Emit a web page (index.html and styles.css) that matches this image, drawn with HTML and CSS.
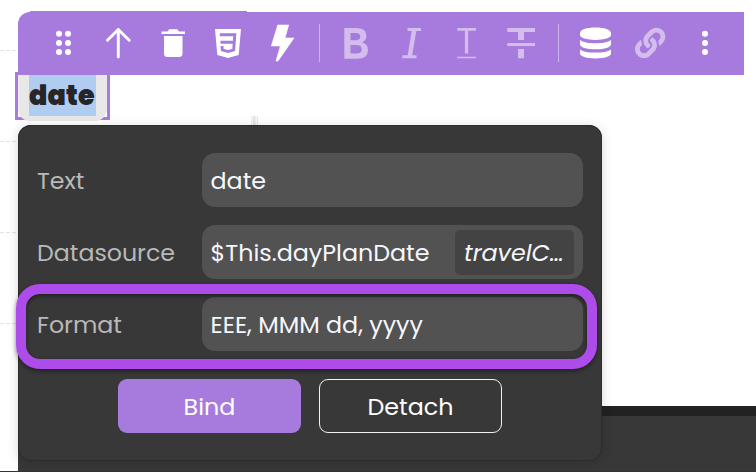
FILE: index.html
```html
<!DOCTYPE html>
<html lang="en">
<head>
<meta charset="utf-8">
<title>Data binding</title>
<link rel="stylesheet" href="styles.css">
</head>
<body>
<div class="editor">
  <div class="guide g1"></div><div class="guide g2"></div><div class="guide g3"></div><div class="guide g4"></div>
  <div class="guide-mark"></div>
  <div class="footer"></div>
  <div class="baseline"></div>
  <div class="toolbar">
    <div class="tool"><svg width="54" height="62" viewBox="36 12 54 62"><g fill="#fff"><circle cx="59" cy="33.8" r="3"/><circle cx="68" cy="33.8" r="3"/><circle cx="59" cy="43" r="3"/><circle cx="68" cy="43" r="3"/><circle cx="59" cy="52" r="3"/><circle cx="68" cy="52" r="3"/></g></svg></div>
    <div class="tool"><svg width="54" height="62" viewBox="91 12 54 62"><path d="M118.3 57V29.5M107.5 40.2L118.3 29.5L129.2 40.2" fill="none" stroke="#fff" stroke-width="2.9" stroke-linecap="round" stroke-linejoin="round"/></svg></div>
    <div class="tool"><svg width="54" height="62" viewBox="146 12 54 62"><path d="M161.5 31.4H167.5L169.2 29.3H177.3L179 31.4H185V34H161.5ZM164 36H182.5V53.5Q182.5 57 179 57H167.5Q164 57 164 53.5Z" fill="#fff"/></svg></div>
    <div class="tool"><svg width="54" height="62" viewBox="201 12 54 62"><path d="M215 29H241L238.7 55L228 58L217.3 55Z" fill="#fff"/><path d="M219.8 34.7H234.8L233.7 50L228 51.6L222.3 50L222 46M220.5 42.3H234" fill="none" stroke="#a77bde" stroke-width="2.9"/></svg></div>
    <div class="tool"><svg width="54" height="62" viewBox="256 12 54 62"><path d="M277.7 25H288.7L285 38H294L278 61H276L280.3 46H271.3Z" fill="#fff" stroke="#fff" stroke-linejoin="round" stroke-width=".6"/></svg></div>
    <div class="divider"></div>
    <div class="tool muted"><svg width="54" height="62" viewBox="329 12 54 62"><path fill-rule="evenodd" d="M344.3 28H356Q366.5 28 366.5 35.7Q366.5 40.5 362 42.2Q368 44 368 50Q368 58.7 357 58.7H344.3ZM350.5 33V40.2H355.5Q360.3 40.2 360.3 36.5Q360.3 33 355.5 33ZM350.5 45V53.6H356.5Q361.7 53.6 361.7 49.3Q361.7 45 356.5 45Z"/></svg></div>
    <div class="tool muted"><svg width="54" height="62" viewBox="384 12 54 62"><path d="M407.5 28H421V31H416.3L412.2 55.2H416.5V58.3H402.3V55.2H407.7L411.7 31H407.5Z"/></svg></div>
    <div class="tool muted"><svg width="54" height="62" viewBox="439 12 54 62"><path d="M457.3 28H476V30.7H468.2V53.5H464.9V30.7H457.3ZM457.3 56.7H476V58.3H457.3Z"/></svg></div>
    <div class="tool muted"><svg width="54" height="62" viewBox="494 12 54 62"><path d="M507.3 28H535V32.1H524V40H518V32.1H507.3ZM507.3 43H535V46H507.3ZM518 49H524V58.2H518Z"/></svg></div>
    <div class="divider wide"></div>
    <div class="tool"><svg width="54" height="62" viewBox="569 12 54 62"><path fill="#fff" d="M580 33.3C580 29.6 586.5 27.5 595.4 27.5S611 29.6 611 33.3V35.1C611 38 604.4 40 595.5 40S580 38 580 35.1ZM580 40C583 42.4 588.5 43.3 595.5 43.3S608 42.4 611 40V44.2C611 47.2 604.4 49.2 595.5 49.2S580 47.2 580 44.2ZM580 49.4C583 51.7 588.5 52.5 595.5 52.5S608 51.7 611 49.4V53.5C611 56.5 604.4 58.4 595.5 58.4S580 56.5 580 53.5Z"/></svg></div>
    <div class="tool muted"><svg width="54" height="62" viewBox="0 0 54 62"><g transform="translate(11 15.7) scale(.0592)"><path d="M326.612 185.391c59.747 59.809 58.927 155.698.36 214.59-.11.12-.24.25-.36.37l-67.2 67.2c-59.27 59.27-155.699 59.262-214.96 0-59.27-59.26-59.27-155.7 0-214.96l37.106-37.106c9.84-9.84 26.786-3.3 27.294 10.606.648 17.722 3.826 35.527 9.69 52.721 1.986 5.822.567 12.262-3.783 16.612l-13.087 13.087c-28.026 28.026-28.905 73.66-1.155 101.96 28.024 28.579 74.086 28.749 102.325.51l67.2-67.19c28.191-28.191 28.073-73.757 0-101.83-3.701-3.694-7.429-6.564-10.341-8.569a16.037 16.037 0 0 1-6.947-12.606c-.396-10.567 3.348-21.456 11.698-29.806l21.054-21.055c5.521-5.521 14.182-6.199 20.584-1.731a152.482 152.482 0 0 1 20.522 17.197zM467.547 44.449c-59.261-59.262-155.69-59.27-214.96 0l-67.2 67.2c-.12.12-.25.25-.36.37-58.566 58.892-59.387 154.781.36 214.59a152.454 152.454 0 0 0 20.521 17.196c6.402 4.468 15.064 3.789 20.584-1.731l21.054-21.055c8.35-8.35 12.094-19.239 11.698-29.806a16.037 16.037 0 0 0-6.947-12.606c-2.912-2.005-6.64-4.875-10.341-8.569-28.073-28.073-28.191-73.639 0-101.83l67.2-67.19c28.239-28.239 74.3-28.069 102.325.51 27.75 28.3 26.872 73.934-1.155 101.96l-13.087 13.087c-4.35 4.35-5.769 10.79-3.783 16.612 5.864 17.194 9.042 34.999 9.69 52.721.509 13.906 17.454 20.446 27.294 10.606l37.106-37.106c59.271-59.259 59.271-155.699.001-214.959z"/></g></svg></div>
    <div class="tool"><svg width="54" height="62" viewBox="679 12 54 62"><g fill="#fff"><circle cx="705" cy="33.8" r="3"/><circle cx="705" cy="43" r="3"/><circle cx="705" cy="52" r="3"/></g></svg></div>
  </div>
  <div class="selection"><div class="chip"><span class="selected">date</span></div></div>
  <div class="panel">
    <div class="row"><label class="label">Text</label><div class="field"><span>date</span></div></div>
    <div class="row"><label class="label">Datasource</label><div class="field"><span>$This.dayPlanDate</span><span class="badge">travelC…</span></div></div>
    <div class="row"><label class="label">Format</label><div class="field"><span>EEE, MMM dd, yyyy</span></div></div>
    <div class="actions"><button class="btn primary">Bind</button><button class="btn outline">Detach</button></div>
    <div class="highlight"></div>
  </div>
</div>
</body>
</html>
```
FILE: styles.css
```css
* { box-sizing: border-box; }
body { margin: 0; background: #fff; font-family: Poppins, Inter, sans-serif; font-feature-settings: "cv11"; }
.editor { position: relative; width: 756px; height: 472px; overflow: hidden; padding: 12px 12px 0 18px; }
.guide { position: absolute; left: 0; width: 18px; height: 1px; background: repeating-linear-gradient(90deg, #e4e4e4 0 4px, #fff 4px 6px); }
.g1 { top: 50px; }
.g2 { top: 141px; }
.g3 { top: 232px; }
.g4 { top: 323px; }
.guide-mark { position: absolute; left: 251px; top: 116px; width: 7px; height: 9px; background: repeating-linear-gradient(90deg, #eee 0 1px, #f8f8f8 1px 2px, #e4e4e4 2px 4px); }
.footer { position: absolute; left: 18px; right: 0; top: 406px; bottom: 0; background: #383838; border-top: 10px solid #222; }
.baseline { position: absolute; left: 0; right: 0; bottom: 0; height: 1px; background: #343033; }
.toolbar { position: relative; z-index: 2; height: 63px; padding-left: 18px; display: flex; align-items: stretch; background: #a77bde; border-radius: 12px 0 0 0; }
.toolbar::before { content: ""; position: absolute; left: 12px; top: -1px; width: 217px; height: 1px; background: #a77bde; }
.tool { flex: 0 0 55px; display: flex; }
.tool svg { display: block; overflow: visible; }
.muted { fill: #d4bced; }
.divider { flex: 0 0 17.5px; display: flex; justify-content: center; align-items: flex-start; padding-top: 12px; }
.divider::before { content: ""; width: 1px; height: 38px; background: #cdb3ed; }
.wide { flex-basis: 20px; }
.selection { position: relative; width: 95px; height: 48px; margin: -3px 0 0 -3px; border: 3px solid #a77bde; }
.chip { width: 89px; height: 46px; padding: 0 0 0 11px; background: #e8e8e8; border-radius: 0 0 12px 12px; }
.selected { display: block; width: 67px; height: 41px; line-height: 41px; background: #b0ccf1; color: #262626; font-size: 27px; font-weight: 900; letter-spacing: .2px; }
.panel { position: relative; width: 584px; height: 336px; margin-top: 5px; padding: 28px 19px 0; background: #383838; border-radius: 13px; box-shadow: 0 0 0 1px #2c2c2c inset, 0 2px 12px rgba(0,0,0,.16); color: #f5f7fc; font-size: 23.8px; font-weight: 400; display: flex; flex-direction: column; gap: 18px; }
.row { height: 54px; display: flex; align-items: center; }
.label { width: 164.5px; padding-top: 1px; color: #b8b8b8; font-size: 23.7px; white-space: nowrap; }
.field { flex: 1; height: 54px; padding: 1px 9px 0; border-radius: 13px; background: #525252; display: flex; align-items: center; justify-content: space-between; white-space: nowrap; }
.badge { width: 119px; height: 45px; line-height: 46px; padding-left: 9px; background: #434343; border-radius: 5px; font-style: italic; }
.actions { height: 54px; margin-top: 10px; display: flex; justify-content: center; gap: 18px; }
.btn { width: 183px; height: 54px; padding: 0; border: 0; border-radius: 9px; font: inherit; font-feature-settings: inherit; color: #fff; }
.primary { background: #a77bde; }
.outline { background: transparent; border: 1px solid #f2f2f2; }
.highlight { position: absolute; left: -2px; top: 158.5px; width: 581px; height: 85.5px; border: 10px solid #ae4ceb; border-radius: 24px; box-shadow: 0 2px 4px rgba(0,0,0,.45), inset 0 2px 4px rgba(0,0,0,.45); }
```
